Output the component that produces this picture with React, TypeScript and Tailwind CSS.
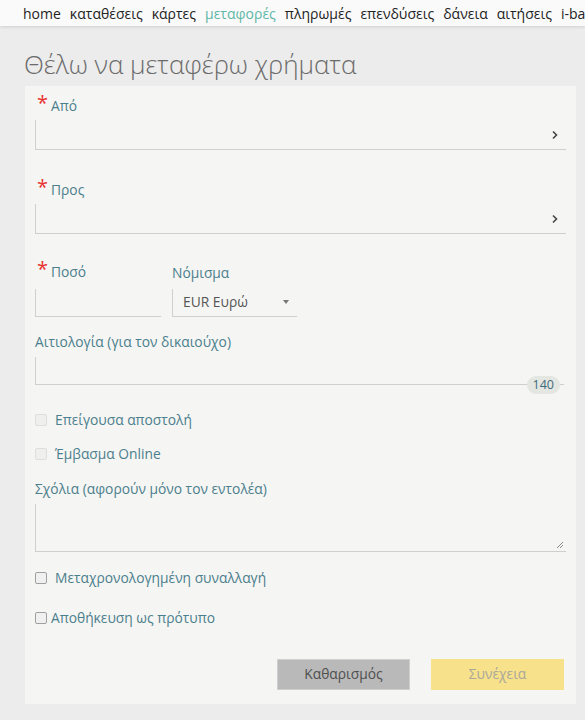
import React from "react";

const navItems = [
	"home",
	"καταθέσεις",
	"κάρτες",
	"μεταφορές",
	"πληρωμές",
	"επενδύσεις",
	"δάνεια",
	"αιτήσεις",
	"i-banking",
];

const Chevron = () => (
	<svg width="8" height="10" viewBox="0 0 8 10" className="mr-[7px]">
		<path d="M2 1.5 L5.5 5 L2 8.5" fill="none" stroke="#444" strokeWidth="1.6" />
	</svg>
);

const Label: React.FC<{ text: string; required?: boolean }> = ({ text, required }) => (
	<div className="flex items-start h-[20px] text-[13.8px] text-[#4b7f8d]">
		{required && <span className="text-[#e8312f] text-[20px] leading-[14px] mr-[3px] ml-[2px]">*</span>}
		<span className="leading-[20px]">{text}</span>
	</div>
);

const PickerField: React.FC<{ label: string }> = ({ label }) => (
	<div>
		<Label text={label} required />
		<div className="mt-[4px] h-[30px] border-l border-b border-[#cfcfcd] flex items-center justify-end">
			<Chevron />
		</div>
	</div>
);

const CheckRow: React.FC<{ text: string; disabled?: boolean; tight?: boolean }> = ({
	text,
	disabled,
	tight,
}) => (
	<div className="flex items-center h-[20px] text-[13.8px] text-[#4b7f8d]">
		<span
			className={`w-[12px] h-[12px] rounded-[2px] border ${
				disabled ? "border-[#dedede] bg-[#efefed]" : "border-[#a0a0a0] bg-[#f0f0f0]"
			}`}
		/>
		<span className={tight ? "ml-[4px]" : "ml-[8px]"}>{text}</span>
	</div>
);

export default function App() {
	return (
		<div
			className="w-[585px] h-[720px] overflow-hidden bg-[#ececec]"
			style={{ fontFamily: '"Open Sans", "Noto Sans", sans-serif' }}
		>
			<div className="h-[26px] bg-[#fafafa] shadow-[0_1px_3px_rgba(0,0,0,0.12)] flex items-center pl-[23px] gap-[9px] whitespace-nowrap overflow-hidden text-[14px] text-[#222]">
				{navItems.map((item) => (
					<span key={item} className={item === "μεταφορές" ? "text-[#5fb7a6]" : ""}>
						{item}
					</span>
				))}
			</div>

			<h1 className="mt-[22px] ml-[24px] text-[26px] font-light leading-[32px] text-[#6b6b6b]">
				Θέλω να μεταφέρω χρήματα
			</h1>

			<div className="mt-[6px] ml-[25px] w-[551px] h-[618px] bg-[#f5f5f3] px-[10px] pt-[10px]">
				<PickerField label="Από" />
				<div className="mt-[30px]">
					<PickerField label="Προς" />
				</div>

				<div className="mt-[28px] flex gap-[11px]">
					<div className="w-[126px]">
						<Label text="Ποσό" required />
						<div className="mt-[7px] h-[28px] border-l border-b border-[#cfcfcd]" />
					</div>
					<div className="w-[125px]">
						<div className="h-[20px] text-[13.8px] leading-[20px] text-[#4b7f8d] mt-[1px]">Νόμισμα</div>
						<div className="mt-[6px] h-[28px] border-l border-b border-[#cfcfcd] flex items-center justify-between pl-[10px] pr-[8px] text-[13.8px] text-[#555]">
							<span>EUR Ευρώ</span>
							<svg width="6" height="5" viewBox="0 0 6 5">
								<path d="M0 0 H6 L3 4 Z" fill="#777" />
							</svg>
						</div>
					</div>
				</div>

				<div className="mt-[15px] h-[20px] text-[13.8px] leading-[20px] text-[#4b7f8d]">
					Αιτιολογία (για τον δικαιούχο)
				</div>
				<div className="mt-[5px] flex items-end">
					<div className="flex-1 h-[28px] border-l border-b border-[#cfcfcd]" />
					<span className="-mb-[9px] -ml-[1px] px-[6px] h-[18px] rounded-full bg-[#e4e6e2] text-[12.5px] leading-[18px] text-[#3f6c7a]">
						140
					</span>
					<span className="w-[4px] border-b border-[#cfcfcd] mr-[2px]" />
				</div>

				<div className="mt-[25px]">
					<CheckRow text="Επείγουσα αποστολή" disabled />
				</div>
				<div className="mt-[14px]">
					<CheckRow text="Έμβασμα Online" disabled />
				</div>

				<div className="mt-[15px] h-[20px] text-[13.8px] leading-[20px] text-[#4b7f8d]">
					Σχόλια (αφορούν μόνο τον εντολέα)
				</div>
				<div className="mt-[5px] h-[48px] border-l border-b border-[#cfcfcd] relative">
					<svg width="8" height="8" viewBox="0 0 8 8" className="absolute right-[2px] bottom-[2px]">
						<path d="M7 1 L1 7 M7 4 L4 7" stroke="#888" strokeWidth="1" />
					</svg>
				</div>

				<div className="mt-[16px]">
					<CheckRow text="Μεταχρονολογημένη συναλλαγή" />
				</div>
				<div className="mt-[20px]">
					<CheckRow text="Αποθήκευση ως πρότυπο" tight />
				</div>

				<div className="mt-[31px] flex justify-end gap-[21px] pr-[2px]">
					<button className="w-[133px] h-[31px] bg-[#b9b9b9] text-[13.8px] text-[#4f4f4f] border border-[#cfcfcf]">
						Καθαρισμός
					</button>
					<button className="w-[133px] h-[31px] bg-[#f7e18b] text-[13.8px] text-[#a9a79c]">
						Συνέχεια
					</button>
				</div>
			</div>
		</div>
	);
}
